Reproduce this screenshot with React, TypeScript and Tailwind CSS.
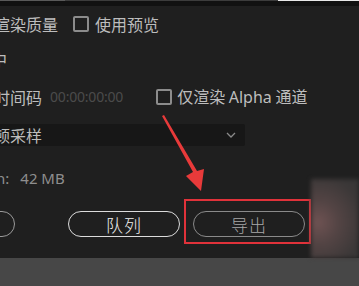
import React from "react";

const Box = () => (
  <span className="inline-block w-[16px] h-[16px] border-2 border-[#8c8c8c] rounded-[2px] shrink-0" />
);

const App = () => {
  return (
    <div
      className="relative w-[359px] h-[286px] overflow-hidden bg-[#474747]"
      style={{ fontFamily: '"Noto Sans CJK SC", "Noto Sans", sans-serif' }}
    >
      <div className="flex h-[1px]">
        <div className="w-[65px] bg-[#5a5a5a]" />
        <div className="w-[213px] bg-[#3c3c3c]" />
        <div className="flex-1 bg-[#e8e8e8]" />
      </div>
      <div className="h-[5px] bg-[#111111]" />

      <div className="h-[252px] bg-[#1f1f1f] flex flex-col text-[16px] text-[#bdbdbd] leading-none">
        <div className="h-[34px] flex items-center ml-[-6px] pt-[1px]">
          <span>渲染质量</span>
          <span className="ml-[15px] flex items-center gap-[6px]">
            <Box />
            <span>使用预览</span>
          </span>
        </div>

        <div className="h-[38px] flex items-center ml-[-9px]">
          <span>中</span>
        </div>

        <div className="h-[37px] flex items-center ml-[-6px]">
          <span>时间码</span>
          <span className="ml-[8px] text-[14px] text-[#4b4b4b] tracking-[-0.2px]" style={{ fontFamily: '"Noto Sans", sans-serif' }}>
            00:00:00:00
          </span>
          <span className="ml-[33px] flex items-center gap-[5px]">
            <Box />
            <span>
              仅渲染 <span style={{ fontFamily: '"Noto Sans", sans-serif' }}>Alpha</span> 通道
            </span>
          </span>
        </div>

        <div className="h-[40px] flex items-center">
          <div className="ml-[-6px] w-[251px] h-[22px] bg-[#171717] rounded-[2px] flex items-center justify-between pr-[4px]">
            <span>顿采样</span>
            <svg width="12" height="8" viewBox="0 0 12 8" className="mr-[4px]">
              <path d="M2 2 L6 6 L10 2" fill="none" stroke="#8a8a8a" strokeWidth="1.3" />
            </svg>
          </div>
        </div>

        <div className="h-[46px] flex items-center ml-[-4px] text-[15px] text-[#8e8e8e]" style={{ fontFamily: '"Noto Sans", sans-serif' }}>
          <span>n:</span>
          <span className="ml-[11px]">42 MB</span>
        </div>

        <div className="h-[46px] flex items-center">
          <div className="ml-[-97px] w-[112px] h-[26px] rounded-full border-[1.5px] border-[#9a9a9a]" />
          <div className="ml-[53px] w-[112px] h-[26px] rounded-full border-[1.5px] border-[#dcdcdc] flex items-center justify-center text-[#f0f0f0] text-[17px] font-light tracking-[1px]">
            队列
          </div>
          <div className="ml-[13px] w-[112px] h-[26px] rounded-full border-[1.5px] border-[#8a8a8a] flex items-center justify-center text-[#a8a8a8] text-[17px] font-light tracking-[1px]">
            导出
          </div>
        </div>
      </div>

      <div className="absolute left-[184px] top-[199px] w-[127px] h-[45px] border-2 border-[#e0323a]" />

      <div
        className="absolute left-[311px] top-[179px] w-[48px] h-[79px]"
        style={{
          background:
            "radial-gradient(ellipse at 15% 55%, #6e5252 0%, #534444 35%, #3c3838 75%, #353535 100%)",
          filter: "blur(2px)",
        }}
      />

      <svg className="absolute left-0 top-0" width="359" height="286">
        <path
          d="M162 116 L193 172 L186 176 L201 191 L204 169 L197 171 L164 115 Z"
          fill="#e83a3a"
        />
      </svg>
    </div>
  );
};

export default App;
